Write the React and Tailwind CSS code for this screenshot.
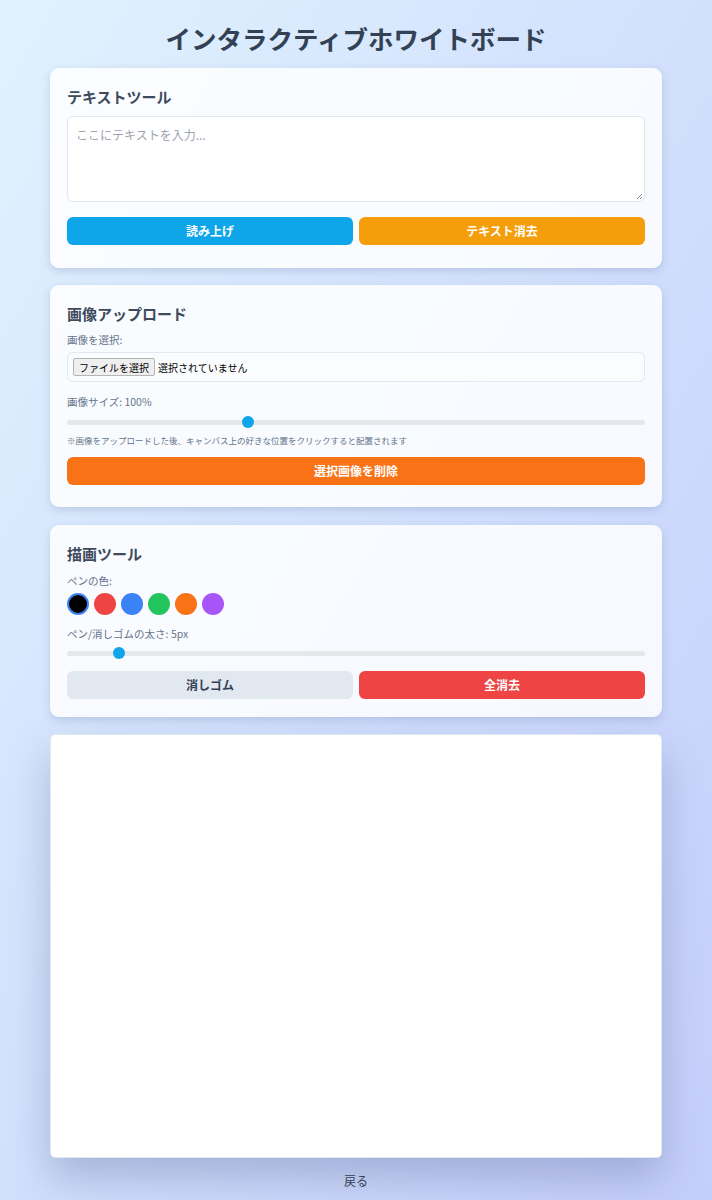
import React from "react";

const font = "font-['Noto_Sans_CJK_JP','Noto_Sans',sans-serif]";

function Slider({ pos }) {
  return (
    <div className="relative h-[12px] flex items-center">
      <div className="w-full h-[5px] rounded-full bg-[#e5e7eb]" />
      <div
        className="absolute top-0 w-[12px] h-[12px] rounded-full bg-[#0ea5e9]"
        style={{ left: `calc(${pos * 100}% - ${pos * 12}px)` }}
      />
    </div>
  );
}

function Card({ children, className = "" }) {
  return (
    <div className={`bg-white/85 rounded-[9px] shadow-[0_3px_8px_rgba(100,116,160,0.25)] px-[17px] pt-[18px] ${className}`}>
      {children}
    </div>
  );
}

export default function App() {
  const colors = ["#000000", "#ef4444", "#3b82f6", "#22c55e", "#f97316", "#a855f7"];
  return (
    <div className={`min-h-[1200px] bg-linear-to-br from-[#e0f2fe] to-[#c4cefb] ${font}`}>
      <div className="w-[612px] mx-auto pt-[20px]">
        <h1 className="text-[25.5px] leading-[36px] font-bold text-[#334155] text-center mb-[12px]">
          インタラクティブホワイトボード
        </h1>

        <Card className="pb-[23px] mb-[17px]">
          <h2 className="text-[15px] leading-[21px] font-bold text-[#3f4a5c] mb-[9px]">テキストツール</h2>
          <div className="h-[86px] rounded-[6px] border border-[#e2e8f0] bg-white px-[8px] py-[4px] relative">
            <span className="text-[12px] leading-[16px] text-[#9ca3af]">ここにテキストを入力...</span>
            <svg className="absolute right-[1px] bottom-[1px]" width="7" height="7" viewBox="0 0 7 7">
              <path d="M6 1L1 6M6 4L4 6" stroke="#8a8a8a" strokeWidth="1" />
            </svg>
          </div>
          <div className="grid grid-cols-2 gap-[6px] mt-[15px]">
            <div className="h-[28px] rounded-[6px] bg-[#0ea5e9] text-white text-[12px] font-bold flex items-center justify-center">読み上げ</div>
            <div className="h-[28px] rounded-[6px] bg-[#f59e0b] text-white text-[12px] font-bold flex items-center justify-center">テキスト消去</div>
          </div>
        </Card>

        <Card className="pb-[22px] mb-[18px]">
          <h2 className="text-[15px] leading-[21px] font-bold text-[#3f4a5c] mb-[8px]">画像アップロード</h2>
          <div className="text-[10.5px] leading-[16px] text-[#64748b] mb-[4px]">画像を選択:</div>
          <div className="h-[30px] rounded-[6px] border border-[#e2e8f0] bg-[#fbfcfe] flex items-center px-[5px] gap-[3px]">
            <span className="h-[18px] px-[5px] rounded-[2px] border border-[#b5b5b5] bg-[#efefef] text-[10px] text-black flex items-center">ファイルを選択</span>
            <span className="text-[10px] text-black">選択されていません</span>
          </div>
          <div className="text-[10.5px] leading-[16px] text-[#64748b] mt-[12px] mb-[6px]">画像サイズ: 100%</div>
          <Slider pos={0.31} />
          <div className="text-[8.5px] leading-[12px] text-[#64748b] mt-[6px] mb-[11px]">
            ※画像をアップロードした後、キャンバス上の好きな位置をクリックすると配置されます
          </div>
          <div className="h-[28px] rounded-[6px] bg-[#f97316] text-white text-[12px] font-bold flex items-center justify-center">選択画像を削除</div>
        </Card>

        <Card className="pb-[18px] mb-[17px]">
          <h2 className="text-[15px] leading-[21px] font-bold text-[#3f4a5c] mb-[9px]">描画ツール</h2>
          <div className="text-[10.5px] leading-[16px] text-[#64748b] mb-[4px]">ペンの色:</div>
          <div className="flex gap-[5px]">
            {colors.map((c, i) => (
              <div
                key={c}
                className={`w-[22px] h-[22px] rounded-full ${i === 0 ? "border-2 border-[#3b82f6]" : ""}`}
                style={{ backgroundColor: c }}
              />
            ))}
          </div>
          <div className="text-[10.5px] leading-[16px] text-[#64748b] mt-[11px] mb-[5px]">ペン/消しゴムの太さ: 5px</div>
          <Slider pos={0.082} />
          <div className="grid grid-cols-2 gap-[6px] mt-[12px]">
            <div className="h-[28px] rounded-[6px] bg-[#e2e8f0] text-[#334155] text-[12px] font-bold flex items-center justify-center">消しゴム</div>
            <div className="h-[28px] rounded-[6px] bg-[#ef4444] text-white text-[12px] font-bold flex items-center justify-center">全消去</div>
          </div>
        </Card>

        <div className="h-[424px] bg-white rounded-[5px] border border-[#e2e8f0] shadow-[0_20px_40px_rgba(90,100,150,0.35)]" />

        <div className="text-center text-[12px] leading-[18px] text-[#374151] mt-[14px]">戻る</div>
      </div>
    </div>
  );
}
